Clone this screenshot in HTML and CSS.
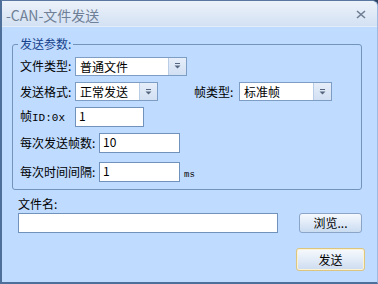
FILE: index.html
```html
<!DOCTYPE html>
<html>
<head>
<meta charset="utf-8">
<link rel="stylesheet" href="styles.css">
</head>
<body>
<div class="window">
  <div class="titlebar">
    <span class="title">-CAN-文件发送</span>
    <svg class="close" width="10" height="9" viewBox="0 0 10 9"><path d="M1 1 L9 8 M9 1 L1 8" stroke="#6f7d92" stroke-width="1.6" fill="none"/></svg>
  </div>
  <fieldset class="group">
    <legend class="legend">发送参数:</legend>
    <div class="group-body">
      <div class="row r1">
        <span class="label w55">文件类型:</span>
        <div class="combo c1"><span class="combo-text">普通文件</span><span class="combo-btn"><svg width="7" height="6" viewBox="0 0 7 6"><rect x="1" y="0" width="5" height="1" fill="#55667e"/><path d="M0.5 2.5 H6.5 L3.5 5.5 Z" fill="#55667e"/></svg></span></div>
      </div>
      <div class="row r2">
        <span class="label w55">发送格式:</span>
        <div class="combo c2"><span class="combo-text">正常发送</span><span class="combo-btn"><svg width="7" height="6" viewBox="0 0 7 6"><rect x="1" y="0" width="5" height="1" fill="#55667e"/><path d="M0.5 2.5 H6.5 L3.5 5.5 Z" fill="#55667e"/></svg></span></div>
        <span class="label w45 frame-label">帧类型:</span>
        <div class="combo c3"><span class="combo-text">标准帧</span><span class="combo-btn"><svg width="7" height="6" viewBox="0 0 7 6"><rect x="1" y="0" width="5" height="1" fill="#55667e"/><path d="M0.5 2.5 H6.5 L3.5 5.5 Z" fill="#55667e"/></svg></span></div>
      </div>
      <div class="row r3">
        <span class="label w55">帧<span class="mono">ID:0x</span></span>
        <div class="input i1">1</div>
      </div>
      <div class="row r4">
        <span class="label w79">每次发送帧数:</span>
        <div class="input i2">10</div>
      </div>
      <div class="row r5">
        <span class="label w79">每次时间间隔:</span>
        <div class="input i2">1</div>
        <span class="unit">ms</span>
      </div>
    </div>
  </fieldset>
  <div class="file-label">文件名:</div>
  <div class="file-row">
    <div class="input file-input"></div>
    <div class="button browse">浏览...</div>
  </div>
  <div class="send-row">
    <div class="button send">发送</div>
  </div>
</div>
</body>
</html>
```
FILE: styles.css
```css
html, body {
  margin: 0;
  padding: 0;
  width: 378px;
  height: 284px;
  overflow: hidden;
  background: #2f4463;
}
.window {
  width: 378px;
  height: 284px;
  box-sizing: border-box;
  display: flex;
  flex-direction: column;
  background: #bfdbff;
  border-left: 2px solid #4f6f9b;
  border-bottom: 2px solid #4f6f9b;
  border-top: 1px solid #5a789f;
  border-right: 1px solid #9dbbe0;
  border-top-right-radius: 6px;
  font-family: "Noto Sans CJK SC", "Noto Sans", sans-serif;
  font-size: 12px;
  color: #000;
}
.titlebar {
  height: 26px;
  box-sizing: border-box;
  border-bottom: 1px solid #e3edf9;
  background: linear-gradient(#ecf2fa, #d3e1f3);
  display: flex;
  align-items: center;
  padding-left: 4px;
  padding-right: 11px;
  border-top-right-radius: 5px;
}
.title {
  font-size: 14px;
  color: #6f7f96;
  line-height: 16px;
  margin-top: 2px;
}
.close {
  margin-left: auto;
  margin-top: 2px;
}
.group {
  margin: 10px 15px 0 10px;
  padding: 0;
  border: 1px solid #7193bc;
  border-radius: 3px;
  height: 153px;
  box-sizing: border-box;
  min-width: 0;
}
.legend {
  margin-left: 5px;
  padding: 0 2px;
  font-size: 12px;
  line-height: 14px;
  color: #15428b;
}
.group-body {
  padding: 5px 0 0 7px;
  display: flex;
  flex-direction: column;
  gap: 6px;
}
.row {
  display: flex;
  align-items: center;
  height: 20px;
}
.r2 { height: 19px; }
.r5 { margin-top: 3px; }
.label {
  white-space: nowrap;
  line-height: 14px;
}
.w55 { width: 55px; }
.w45 { width: 45px; }
.w79 { width: 79px; }
.frame-label { margin-left: 36px; }
.mono {
  font-family: "Liberation Mono", "DejaVu Sans Mono", monospace;
  font-size: 11px;
}
.combo {
  height: 19px;
  box-sizing: border-box;
  border: 1px solid #7e9dc4;
  background: #fff;
  display: flex;
  align-items: stretch;
}
.c1 { width: 112px; }
.c2 { width: 83px; }
.c3 { width: 93px; }
.combo-text {
  flex: 1;
  padding-left: 4px;
  line-height: 17px;
  white-space: nowrap;
  overflow: hidden;
}
.combo-btn {
  width: 17px;
  border-left: 1px solid #b9cde6;
  background: linear-gradient(#e6eef9, #d2e0f3);
  display: flex;
  align-items: center;
  justify-content: center;
}
.input {
  height: 20px;
  box-sizing: border-box;
  border: 1px solid #7092bd;
  background: #fff;
  padding-left: 3px;
  line-height: 16px;
}
.i1 { width: 69px; }
.i2 { width: 81px; }
.unit {
  margin-left: 4px;
  margin-top: 6px;
  font-family: "Liberation Mono", "DejaVu Sans Mono", monospace;
  font-size: 9px;
}
.file-label {
  margin: 7px 0 0 16px;
  line-height: 14px;
}
.file-row {
  display: flex;
  margin-top: 2px;
  padding: 0 15px 0 16px;
}
.file-input { width: 260px; }
.button {
  box-sizing: border-box;
  border: 1px solid #8aa5c8;
  border-radius: 3px;
  background: linear-gradient(#f6f9fd, #e0eaf7 50%, #cadcf1);
  display: flex;
  align-items: center;
  justify-content: center;
  line-height: 14px;
}
.browse {
  margin-left: auto;
  width: 63px;
  height: 20px;
}
.send-row {
  display: flex;
  justify-content: flex-end;
  padding-right: 12px;
  margin-top: 15px;
}
.send {
  width: 69px;
  height: 23px;
  border-color: #dcc57f;
  box-shadow: inset 0 0 0 1px #fbf3d4;
  background: linear-gradient(#f7fafd, #e2ebf7 50%, #cddcf0);
}
```
